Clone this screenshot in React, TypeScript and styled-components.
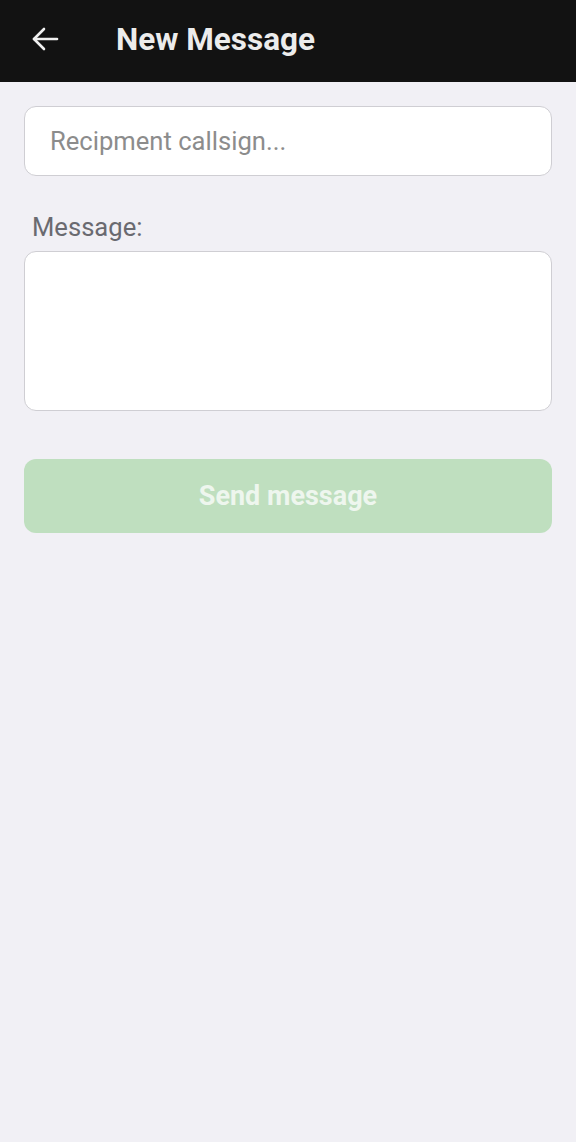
import React from "react";
import styled, { createGlobalStyle } from "styled-components";

const Global = createGlobalStyle`
  html, body { margin: 0; padding: 0; background: #f1f0f5; }
  body { font-family: Roboto, "Noto Sans", sans-serif; }
  * { box-sizing: border-box; }
`;

const Page = styled.div`
  min-height: 1142px;
  background: #f1f0f5;
  display: flex;
  flex-direction: column;
`;

const Header = styled.header`
  height: 82px;
  background: #121212;
  display: flex;
  align-items: center;
  padding-left: 30px;
  padding-bottom: 4px;
  gap: 56px;
`;

const BackButton = styled.button`
  width: 30px;
  height: 30px;
  padding: 0;
  border: none;
  background: transparent;
  display: flex;
  align-items: center;
  justify-content: center;
  color: #f0f0f0;
`;

const Title = styled.h1`
  margin: 0;
  font-size: 31.5px;
  font-weight: 700;
  color: #ececec;
`;

const Body = styled.main`
  padding: 24px 24px 0 24px;
  display: flex;
  flex-direction: column;
`;

const TextInput = styled.input`
  height: 70px;
  width: 100%;
  border: 1.5px solid #cfced3;
  border-radius: 12px;
  background: #fff;
  padding: 0 25px;
  font-family: Roboto, sans-serif;
  font-size: 25.6px;
  color: #333;
  outline: none;
  &::placeholder { color: #8c8c8c; }
`;

const Label = styled.label`
  margin-top: 36px;
  margin-left: 8px;
  font-size: 25.6px;
  color: #6a6a70;
  line-height: 30px;
`;

const TextArea = styled.textarea`
  margin-top: 9px;
  height: 160px;
  width: 100%;
  border: 1.5px solid #cfced3;
  border-radius: 12px;
  background: #fff;
  padding: 16px 25px;
  font-family: Roboto, sans-serif;
  font-size: 25px;
  resize: none;
  outline: none;
`;

const SendButton = styled.button`
  margin-top: 48px;
  height: 74px;
  width: 100%;
  border: none;
  border-radius: 12px;
  background: #bfdfbf;
  color: #eef6ee;
  font-family: Roboto, sans-serif;
  font-size: 27px;
  font-weight: 700;
`;

export default function App() {
  return (
    <Page>
      <Global />
      <Header>
        <BackButton aria-label="Back">
          <svg width="30" height="30" viewBox="0 0 30 30" fill="none" stroke="currentColor" strokeWidth="2.6" strokeLinecap="round" strokeLinejoin="round">
            <path d="M27 15H4" />
            <path d="M14 5L4 15l10 10" />
          </svg>
        </BackButton>
        <Title>New Message</Title>
      </Header>
      <Body>
        <TextInput placeholder="Recipment callsign..." />
        <Label>Message:</Label>
        <TextArea />
        <SendButton disabled>Send message</SendButton>
      </Body>
    </Page>
  );
}
